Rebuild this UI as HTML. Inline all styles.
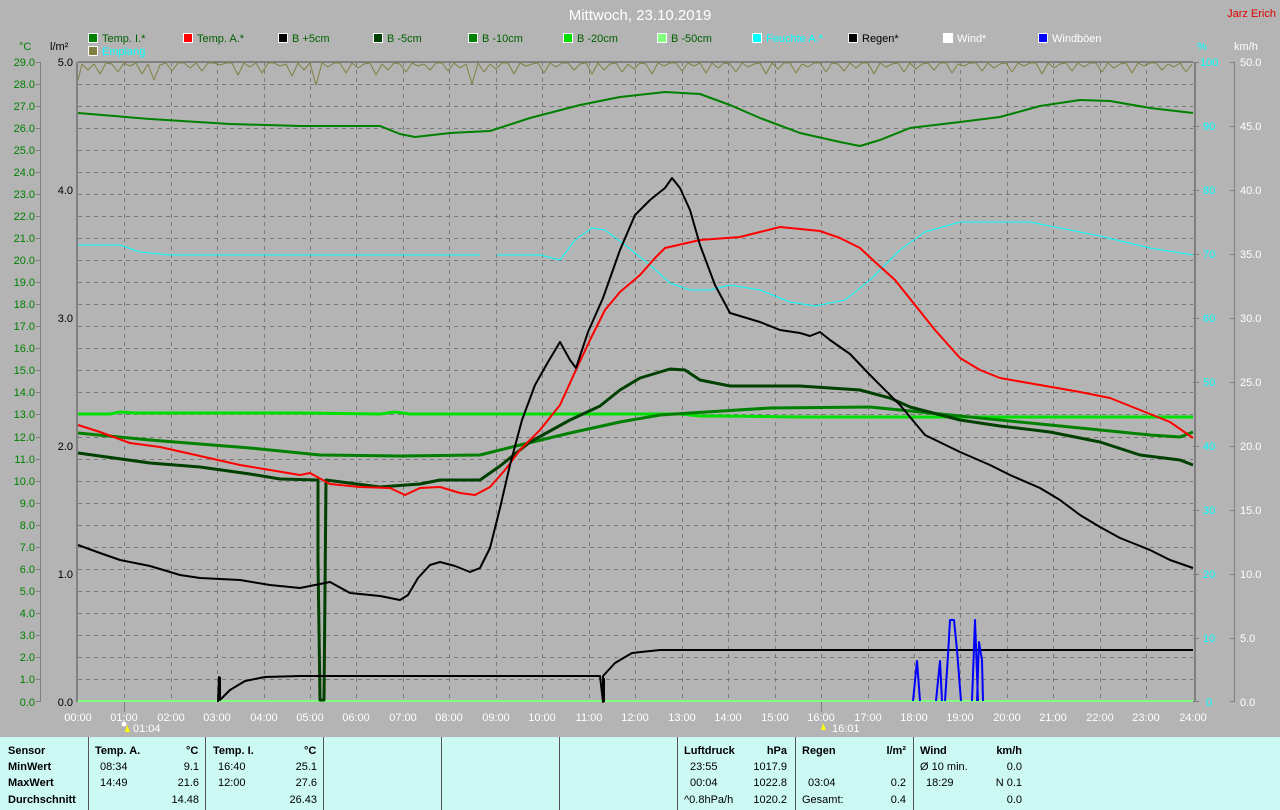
<!DOCTYPE html>
<html><head><meta charset="utf-8"><style>
body{margin:0;width:1280px;height:810px;background:#b4b4b4;overflow:hidden;font-family:"Liberation Sans",sans-serif;}
svg{position:absolute;left:0;top:0}
.tb{position:absolute;left:0;top:737px;width:1280px;height:73px;background:#cdf9f5;font-size:11px;color:#000}
.tb div{position:absolute;white-space:nowrap}
.b{font-weight:bold}
.v{position:absolute;top:0;width:1px;height:73px;background:#555}
</style></head><body>
<svg width="1280" height="737" xmlns="http://www.w3.org/2000/svg" font-family="Liberation Sans, sans-serif" font-size="11">
<text x="640" y="20" fill="#fff" font-size="15" text-anchor="middle">Mittwoch, 23.10.2019</text>
<text x="1276" y="17" fill="#e00000" font-size="11" text-anchor="end">Jarz Erich</text>
<g font-size="11">
<rect x="88.5" y="33.5" width="9" height="9" fill="#008000" stroke="#fff"/><text x="102" y="42" fill="#006000">Temp. I.*</text>
<rect x="183.5" y="33.5" width="9" height="9" fill="#ff0000" stroke="#fff"/><text x="197" y="42" fill="#006000">Temp. A.*</text>
<rect x="278.5" y="33.5" width="9" height="9" fill="#000" stroke="#fff"/><text x="292" y="42" fill="#006000">B +5cm</text>
<rect x="373.5" y="33.5" width="9" height="9" fill="#004000" stroke="#fff"/><text x="387" y="42" fill="#006000">B -5cm</text>
<rect x="468.5" y="33.5" width="9" height="9" fill="#008000" stroke="#fff"/><text x="482" y="42" fill="#006000">B -10cm</text>
<rect x="563.5" y="33.5" width="9" height="9" fill="#00e000" stroke="#fff"/><text x="577" y="42" fill="#006000">B -20cm</text>
<rect x="657.5" y="33.5" width="9" height="9" fill="#80ff80" stroke="#fff"/><text x="671" y="42" fill="#006000">B -50cm</text>
<rect x="752.5" y="33.5" width="9" height="9" fill="#00ffff" stroke="#fff"/><text x="766" y="42" fill="#00ffff">Feuchte A.*</text>
<rect x="848.5" y="33.5" width="9" height="9" fill="#000" stroke="#fff"/><text x="862" y="42" fill="#000">Regen*</text>
<rect x="943.5" y="33.5" width="9" height="9" fill="#fff" stroke="#fff"/><text x="957" y="42" fill="#fff">Wind*</text>
<rect x="1038.5" y="33.5" width="9" height="9" fill="#0000ff" stroke="#fff"/><text x="1052" y="42" fill="#fff">Windböen</text>
<rect x="88.5" y="46.5" width="9" height="9" fill="#808040" stroke="#fff"/><text x="102" y="55" fill="#00ffff">Emplang</text>
</g>
<text x="19" y="50" fill="#008000">°C</text>
<text x="50" y="50" fill="#000">l/m²</text>
<text x="1197" y="50" fill="#00ffff">%</text>
<text x="1234" y="50" fill="#fff">km/h</text>
<!-- grid -->
<g stroke="#7a7a7a" stroke-dasharray="4,4" stroke-width="1">
<path id="hg" d="M78 84.5H1193M78 106.5H1193M78 128.5H1193M78 150.5H1193M78 172.5H1193M78 194.5H1193M78 216.5H1193M78 238.5H1193M78 260.5H1193M78 282.5H1193M78 304.5H1193M78 326.5H1193M78 348.5H1193M78 370.5H1193M78 392.5H1193M78 414.5H1193M78 437.5H1193M78 459.5H1193M78 481.5H1193M78 503.5H1193M78 525.5H1193M78 547.5H1193M78 569.5H1193M78 591.5H1193M78 613.5H1193M78 635.5H1193M78 657.5H1193M78 679.5H1193"/>
<path d="M124.5 62V702M171.5 62V702M217.5 62V702M264.5 62V702M310.5 62V702M356.5 62V702M403.5 62V702M449.5 62V702M496.5 62V702M542.5 62V702M589.5 62V702M635.5 62V702M682.5 62V702M728.5 62V702M775.5 62V702M821.5 62V702M868.5 62V702M914.5 62V702M960.5 62V702M1007.5 62V702M1053.5 62V702M1100.5 62V702M1146.5 62V702"/>
</g>
<!-- axes -->
<g stroke="#808080" stroke-width="1" fill="none">
<path d="M40.5 62V702M1234.5 62V702"/>
<path d="M77 62V702M1195 62V702M78 62H1193" stroke-width="2"/>
</g>
<g stroke="#808080">
<path d="M36 62.5h5M36 84.5h5M36 106.5h5M36 128.5h5M36 150.5h5M36 172.5h5M36 194.5h5M36 216.5h5M36 238.5h5M36 260.5h5M36 282.5h5M36 304.5h5M36 326.5h5M36 348.5h5M36 370.5h5M36 392.5h5M36 414.5h5M36 437.5h5M36 459.5h5M36 481.5h5M36 503.5h5M36 525.5h5M36 547.5h5M36 569.5h5M36 591.5h5M36 613.5h5M36 635.5h5M36 657.5h5M36 679.5h5M36 701.5h5"/>
<path d="M1193 62.5h6M1193 126.5h6M1193 190.5h6M1193 254.5h6M1193 318.5h6M1193 382.5h6M1193 446.5h6M1193 510.5h6M1193 574.5h6M1193 638.5h6M1193 701.5h6M1230 62.5h5M1230 126.5h5M1230 190.5h5M1230 254.5h5M1230 318.5h5M1230 382.5h5M1230 446.5h5M1230 510.5h5M1230 574.5h5M1230 638.5h5M1230 701.5h5"/>
<path d="M124.5 702v10M821.5 702v10"/>
</g>
<g fill="#008000" text-anchor="end">
<text x="35" y="66">29.0</text><text x="35" y="88">28.0</text><text x="35" y="110">27.0</text><text x="35" y="132">26.0</text><text x="35" y="154">25.0</text><text x="35" y="176">24.0</text><text x="35" y="198">23.0</text><text x="35" y="220">22.0</text><text x="35" y="242">21.0</text><text x="35" y="264">20.0</text><text x="35" y="286">19.0</text><text x="35" y="308">18.0</text><text x="35" y="330">17.0</text><text x="35" y="352">16.0</text><text x="35" y="374">15.0</text><text x="35" y="396">14.0</text><text x="35" y="418">13.0</text><text x="35" y="441">12.0</text><text x="35" y="463">11.0</text><text x="35" y="485">10.0</text><text x="35" y="507">9.0</text><text x="35" y="529">8.0</text><text x="35" y="551">7.0</text><text x="35" y="573">6.0</text><text x="35" y="595">5.0</text><text x="35" y="617">4.0</text><text x="35" y="639">3.0</text><text x="35" y="661">2.0</text><text x="35" y="683">1.0</text><text x="35" y="706">0.0</text>
</g>
<g fill="#000" text-anchor="end">
<text x="73" y="66">5.0</text><text x="73" y="194">4.0</text><text x="73" y="322">3.0</text><text x="73" y="450">2.0</text><text x="73" y="578">1.0</text><text x="73" y="706">0.0</text>
</g>
<g fill="#00ffff">
<text x="1200" y="66">100</text><text x="1203" y="130">90</text><text x="1203" y="194">80</text><text x="1203" y="258">70</text><text x="1203" y="322">60</text><text x="1203" y="386">50</text><text x="1203" y="450">40</text><text x="1203" y="514">30</text><text x="1203" y="578">20</text><text x="1203" y="642">10</text><text x="1206" y="706">0</text>
</g>
<g fill="#fff">
<text x="1240" y="66">50.0</text><text x="1240" y="130">45.0</text><text x="1240" y="194">40.0</text><text x="1240" y="258">35.0</text><text x="1240" y="322">30.0</text><text x="1240" y="386">25.0</text><text x="1240" y="450">20.0</text><text x="1240" y="514">15.0</text><text x="1240" y="578">10.0</text><text x="1240" y="642">5.0</text><text x="1240" y="706">0.0</text>
</g>
<g fill="#fff" text-anchor="middle">
<text x="78" y="721">00:00</text><text x="124" y="721">01:00</text><text x="171" y="721">02:00</text><text x="217" y="721">03:00</text><text x="264" y="721">04:00</text><text x="310" y="721">05:00</text><text x="356" y="721">06:00</text><text x="403" y="721">07:00</text><text x="449" y="721">08:00</text><text x="496" y="721">09:00</text><text x="542" y="721">10:00</text><text x="589" y="721">11:00</text><text x="635" y="721">12:00</text><text x="682" y="721">13:00</text><text x="728" y="721">14:00</text><text x="775" y="721">15:00</text><text x="821" y="721">16:00</text><text x="868" y="721">17:00</text><text x="914" y="721">18:00</text><text x="960" y="721">19:00</text><text x="1007" y="721">20:00</text><text x="1053" y="721">21:00</text><text x="1100" y="721">22:00</text><text x="1146" y="721">23:00</text><text x="1193" y="721">24:00</text>
</g>
<circle cx="124" cy="724" r="2.5" fill="#fff"/><path d="M127 725l3 7h-5z" fill="#ff0"/><text x="133" y="732" fill="#fff">01:04</text>
<path d="M823 723l3 7h-5z" fill="#ff0"/><text x="832" y="732" fill="#fff">16:01</text>
<!-- curves -->
<g fill="none" stroke-linejoin="round">
<path stroke="#80ff80" stroke-width="2" d="M78 701H1193"/>
<path stroke="#808040" stroke-width="1" d="M78 80L82 64L88 70L94 64L100 74L106 63L112 64L118 72L124 63L130 66L136 63L142 74L148 64L154 80L160 65L166 63L172 71L178 63L184 63L190 68L196 63L202 71L208 63L214 63L220 65L226 63L232 63L238 75L244 63L250 67L256 63L262 73L268 63L274 63L280 66L286 64L292 76L298 63L304 70L310 63L316 85L322 63L328 67L334 63L340 63L346 73L352 63L358 68L364 64L370 63L376 75L382 64L388 70L394 63L400 64L406 72L412 63L418 66L424 64L430 70L436 63L442 63L448 71L454 63L460 68L466 64L472 84L478 63L484 72L490 64L496 69L502 63L508 63L514 74L520 63L526 66L532 64L538 63L544 73L550 63L556 67L562 63L568 63L574 70L580 64L586 63L592 74L598 63L604 70L610 64L616 63L622 72L628 64L634 69L640 63L646 64L652 74L658 63L664 66L670 63L676 63L682 71L688 63L694 66L700 63L706 73L712 63L718 68L724 63L730 64L736 72L742 63L748 67L754 64L760 63L766 74L772 63L778 69L784 63L790 63L796 73L802 64L808 67L814 63L820 63L826 72L832 63L838 64L844 71L850 63L856 68L862 63L868 63L874 74L880 63L886 67L892 64L898 63L904 72L910 63L916 69L922 64L928 63L934 70L940 63L946 63L952 73L958 64L964 66L970 63L976 63L982 71L988 63L994 68L1000 64L1006 63L1012 72L1018 63L1024 66L1030 63L1036 63L1042 74L1048 63L1054 68L1060 64L1066 63L1072 71L1078 63L1084 67L1090 63L1096 63L1102 72L1108 63L1114 68L1120 64L1126 63L1132 73L1138 63L1144 66L1150 63L1156 63L1162 70L1168 64L1174 67L1180 63L1186 72L1192 64"/>
<path stroke="#00ffff" stroke-width="1" d="M78 245L120 245L140 252L170 255L480 255M497 255L540 255L560 260L575 240L592 228L605 230L625 245L650 265L670 283L690 290L710 290L730 285L760 290L790 302L815 306L845 300L870 280L900 250L925 232L960 222L1030 222L1070 230L1100 236L1150 248L1193 255"/>
<path stroke="#008000" stroke-width="2" d="M78 113L150 119L230 124L300 126L380 126L400 134L415 137L450 133L490 131L530 118L580 105L620 97L665 92L700 94L730 105L760 118L800 133L840 142L860 146L880 140L910 128L960 122L1000 117L1040 106L1080 100L1110 101L1150 108L1193 113"/>
<path stroke="#00e000" stroke-width="3" d="M78 414L110 414L120 412L135 413L300 413L380 414L395 412L410 414L680 414L700 416L720 416L800 417L1193 417"/>
<path stroke="#008000" stroke-width="3" d="M78 433L150 440L250 448L320 455L400 456L480 455L520 445L570 433L620 422L660 415L690 413L770 408L870 407L900 410L960 416L1050 425L1150 435L1180 437L1193 432"/>
<path stroke="#004000" stroke-width="3" d="M78 453L150 463L200 467L250 474L280 479L318 480L318 560L320 700L324 700L326 480L380 487L420 484L440 480L480 480L500 466L530 442L570 420L600 406L620 390L640 378L670 369L685 370L700 380L730 386L800 386L860 390L890 398L910 407L960 420L1000 426L1050 432L1100 442L1140 455L1180 460L1193 465"/>
<path stroke="#ff0000" stroke-width="2" d="M78 425L100 432L130 443L160 447L200 456L240 465L270 470L300 475L310 473L330 484L360 487L390 488L405 495L420 488L440 487L460 493L475 495L490 487L505 470L520 450L540 430L560 405L575 372L590 340L605 310L620 292L640 275L655 258L665 248L700 240L740 237L760 232L780 227L820 231L840 238L860 248L875 262L895 280L915 305L935 330L960 358L980 370L1000 378L1040 385L1080 392L1110 398L1140 410L1170 422L1193 438"/>
<path stroke="#000" stroke-width="2" d="M78 545L100 553L120 560L150 566L180 575L200 578L240 580L270 585L300 588L330 582L350 593L380 596L400 600L408 595L418 578L430 565L440 562L455 566L470 572L480 568L490 548L500 508L510 465L522 420L535 385L548 362L560 342L570 360L576 368L588 332L603 298L620 250L635 215L650 200L665 188L672 178L680 188L690 210L700 245L715 285L730 313L760 322L780 330L800 333L810 336L820 332L830 340L850 354L870 375L900 405L925 435L960 452L990 465L1010 475L1040 488L1060 500L1080 515L1100 527L1120 538L1150 550L1170 560L1193 568"/>
<path stroke="#000" stroke-width="2" d="M218 702L219 677L220 700L230 690L245 681L265 677L300 676L600 676L603 702L603 676L615 663L632 653L660 650L1193 650"/>
<path stroke="#000" stroke-width="3" d="M219.5 677V700M603.5 678V702"/>
<path stroke="#0000ff" stroke-width="2" d="M913 701L917 661L920 701M936 701L940 661L942 701M945 701L948 655L950 620L954 620L957 650L961 701M972 701L975 620L978 701M977 701L979 642L982 660L983 701"/>
</g>
</svg>
<div class="tb">
<div class="v" style="left:88px"></div><div class="v" style="left:205px"></div><div class="v" style="left:323px"></div><div class="v" style="left:441px"></div><div class="v" style="left:559px"></div><div class="v" style="left:677px"></div><div class="v" style="left:795px"></div><div class="v" style="left:913px"></div>
<div class="b" style="left:8px;top:8px">Sensor</div><div class="b" style="left:8px;top:24px">MinWert</div><div class="b" style="left:8px;top:40px">MaxWert</div><div class="b" style="left:8px;top:57px">Durchschnitt</div>
<div class="b" style="left:95px;top:8px">Temp. A.</div><div class="b" style="left:186px;top:8px">°C</div>
<div style="left:100px;top:24px">08:34</div><div style="right:1081px;top:24px">9.1</div>
<div style="left:100px;top:40px">14:49</div><div style="right:1081px;top:40px">21.6</div>
<div style="right:1081px;top:57px">14.48</div>
<div class="b" style="left:213px;top:8px">Temp. I.</div><div class="b" style="left:304px;top:8px">°C</div>
<div style="left:218px;top:24px">16:40</div><div style="right:963px;top:24px">25.1</div>
<div style="left:218px;top:40px">12:00</div><div style="right:963px;top:40px">27.6</div>
<div style="right:963px;top:57px">26.43</div>
<div class="b" style="left:684px;top:8px">Luftdruck</div><div class="b" style="right:493px;top:8px">hPa</div>
<div style="left:690px;top:24px">23:55</div><div style="right:493px;top:24px">1017.9</div>
<div style="left:690px;top:40px">00:04</div><div style="right:493px;top:40px">1022.8</div>
<div style="left:684px;top:57px">^0.8hPa/h</div><div style="right:493px;top:57px">1020.2</div>
<div class="b" style="left:802px;top:8px">Regen</div><div class="b" style="right:374px;top:8px">l/m²</div>
<div style="left:808px;top:40px">03:04</div><div style="right:374px;top:40px">0.2</div>
<div style="left:802px;top:57px">Gesamt:</div><div style="right:374px;top:57px">0.4</div>
<div class="b" style="left:920px;top:8px">Wind</div><div class="b" style="right:258px;top:8px">km/h</div>
<div style="left:920px;top:24px">Ø 10 min.</div><div style="right:258px;top:24px">0.0</div>
<div style="left:926px;top:40px">18:29</div><div style="right:258px;top:40px">N 0.1</div>
<div style="right:258px;top:57px">0.0</div>
</div>
</body></html>
